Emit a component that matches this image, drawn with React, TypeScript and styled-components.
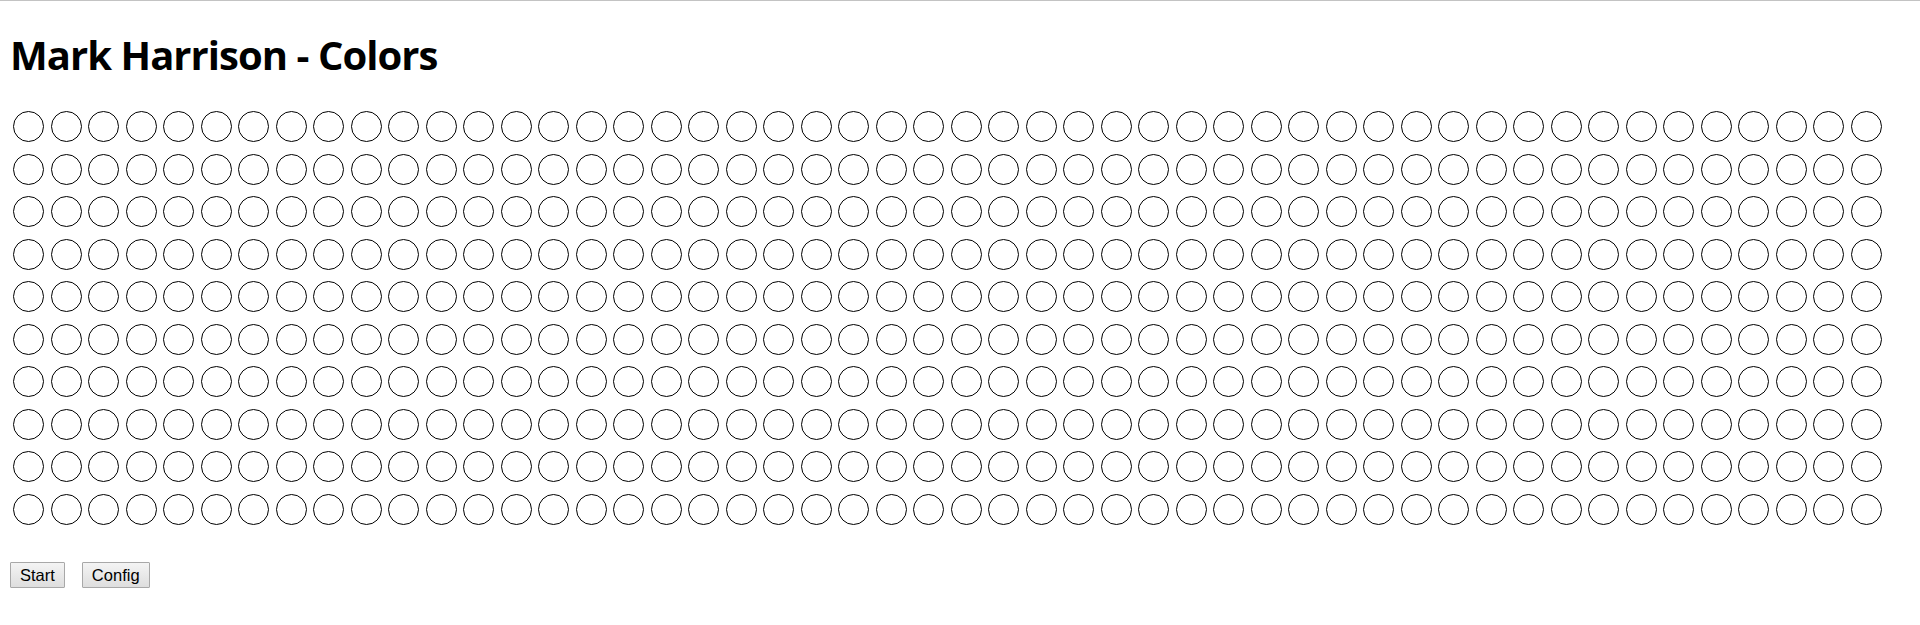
import React from "react";
import styled, { createGlobalStyle } from "styled-components";

const GlobalStyle = createGlobalStyle`
  html, body {
    margin: 0;
    padding: 0;
    background: #ffffff;
  }
`;

const Page = styled.div`
  border-top: 1px solid #c3c3c3;
  padding: 0 10px;
  font-family: "Liberation Sans", Arial, sans-serif;
  color: #000;
`;

const Title = styled.h1`
  margin: 26px 0 0 0;
  font-family: "Open Sans", "Noto Sans", sans-serif;
  font-weight: 700;
  font-size: 40px;
  line-height: normal;
  letter-spacing: -0.95px;
  color: #000;
`;

const Board = styled.div`
  margin-top: 29px;
  padding-left: 3.125px;
  display: grid;
  grid-template-columns: repeat(50, 31.25px);
  grid-auto-rows: 31.25px;
  column-gap: 6.25px;
  row-gap: 11.25px;
`;

const Peg = styled.div<{ $color?: string }>`
  box-sizing: border-box;
  width: 31.25px;
  height: 31.25px;
  border: 1.25px solid #000;
  border-radius: 50%;
  background: ${(p) => p.$color ?? "transparent"};
`;

const Controls = styled.div`
  margin-top: 37.5px;
  display: flex;
  gap: 17px;
`;

const Button = styled.button`
  box-sizing: border-box;
  height: 26px;
  padding: 0 9px;
  font-family: "Liberation Sans", Arial, sans-serif;
  font-size: 16.5px;
  color: #000;
  background: linear-gradient(#f4f4f4, #dedede);
  border: 1px solid #a8a8a8;
  border-radius: 1px;
  cursor: pointer;
`;

const ROWS = 10;
const COLS = 50;

export default function App() {
  const cells = Array.from({ length: ROWS * COLS }, (_, i) => i);
  return (
    <>
      <GlobalStyle />
      <Page>
        <Title>Mark Harrison - Colors</Title>
        <Board>
          {cells.map((i) => (
            <Peg key={i} />
          ))}
        </Board>
        <Controls>
          <Button>Start</Button>
          <Button>Config</Button>
        </Controls>
      </Page>
    </>
  );
}
